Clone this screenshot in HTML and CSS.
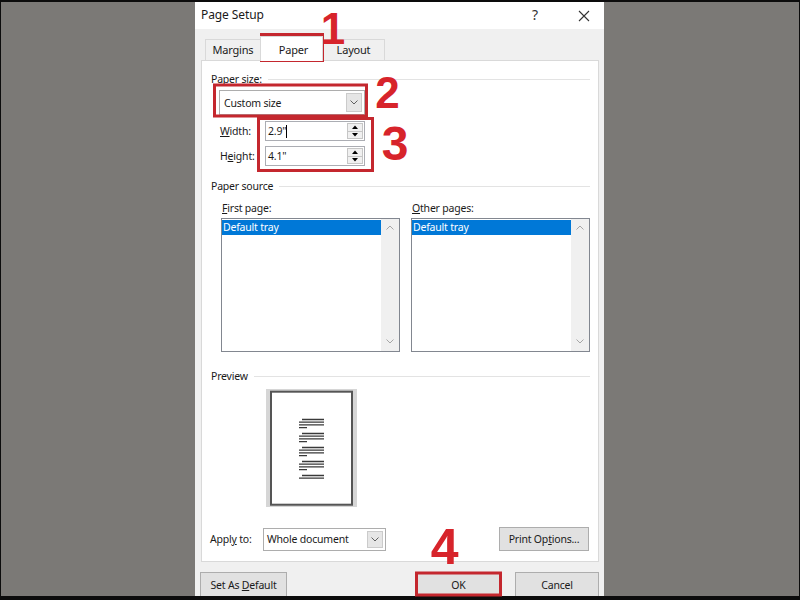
FILE: index.html
```html
<!DOCTYPE html>
<html lang="en">
	<head>
		<meta charset="UTF-8" />
		<meta name="viewport" content="width=device-width, initial-scale=1.0" />
		<title>Page Setup</title>
		<link rel="stylesheet" href="styles.css">
	</head>
	<body>
		<div class="screen">
			<div class="dialog">
				<div class="titlebar">
					<span class="title">Page Setup</span>
					<span class="help">?</span>
					<svg class="close" width="12" height="12" viewBox="0 0 12 12"><path d="M1 1 11 11M11 1 1 11" stroke="#333" stroke-width="1.1" fill="none" /></svg>
				</div>
				<div class="tabs">
					<div class="tab margins">Margins</div>
					<div class="tab paper active">Paper</div>
					<div class="tab layout">Layout</div>
				</div>
				<div class="panel">
					<div class="group first"><span>Pape<u>r</u> size:</span><i></i></div>
					<div class="select size">
						<span>Custom size</span>
						<b class="arrow"><svg width="8" height="5" viewBox="0 0 8 5"><path d="M0.5 0.5 4 4 7.5 0.5" fill="none" stroke="#606060" /></svg></b>
					</div>
					<div class="field">
						<label><u>W</u>idth:</label>
						<div class="spin">
							<span>2.9"<em class="caret"></em></span>
							<div class="spinner">
								<b><svg width="6" height="4" viewBox="0 0 6 4"><path d="M0 4 3 0.5 6 4z" /></svg></b>
								<b><svg width="6" height="4" viewBox="0 0 6 4"><path d="M0 0 3 3.5 6 0z" /></svg></b>
							</div>
						</div>
					</div>
					<div class="field second">
						<label>H<u>e</u>ight:</label>
						<div class="spin">
							<span>4.1"</span>
							<div class="spinner">
								<b><svg width="6" height="4" viewBox="0 0 6 4"><path d="M0 4 3 0.5 6 4z" /></svg></b>
								<b><svg width="6" height="4" viewBox="0 0 6 4"><path d="M0 0 3 3.5 6 0z" /></svg></b>
							</div>
						</div>
					</div>
					<div class="group source"><span>Paper source</span><i></i></div>
					<div class="sources">
						<div class="col">
							<label><u>F</u>irst page:</label>
							<div class="list">
								<div class="items"><div class="item sel">Default tray</div></div>
								<div class="scroll">
									<svg width="8" height="5" viewBox="0 0 8 5"><path d="M0.5 4.5 4 1 7.5 4.5" fill="none" stroke="#a6a6a6" /></svg>
									<svg width="8" height="5" viewBox="0 0 8 5"><path d="M0.5 0.5 4 4 7.5 0.5" fill="none" stroke="#a6a6a6" /></svg>
								</div>
							</div>
						</div>
						<div class="col">
							<label><u>O</u>ther pages:</label>
							<div class="list">
								<div class="items"><div class="item sel">Default tray</div></div>
								<div class="scroll">
									<svg width="8" height="5" viewBox="0 0 8 5"><path d="M0.5 4.5 4 1 7.5 4.5" fill="none" stroke="#a6a6a6" /></svg>
									<svg width="8" height="5" viewBox="0 0 8 5"><path d="M0.5 0.5 4 4 7.5 0.5" fill="none" stroke="#a6a6a6" /></svg>
								</div>
							</div>
						</div>
					</div>
					<div class="group preview-head"><span>Preview</span><i></i></div>
					<svg class="preview" width="91" height="118" viewBox="0 0 91 118">
						<rect width="91" height="118" fill="#d6d6d6" />
						<rect x="5" y="2.7" width="81" height="113" fill="#fff" stroke="#555" stroke-width="2" />
						<g stroke="#3a3a3a" stroke-width="1.3">
							<path d="M36 30.5H58M33 33.2H58M33 35.9H58M33 38.7H41" />
							<path d="M36 44.5H58M33 47.2H58M33 49.9H58M33 52.7H41" />
							<path d="M36 58.5H58M33 61.2H58M33 63.9H58M33 66.7H41" />
							<path d="M36 72.5H58M33 75.2H58M33 77.9H58M33 80.7H41" />
							<path d="M36 86.5H58M33 89.2H58" />
						</g>
					</svg>
					<div class="apply">
						<label>Appl<u>y</u> to:</label>
						<div class="select whole">
							<span>Whole document</span>
							<b class="arrow"><svg width="8" height="5" viewBox="0 0 8 5"><path d="M0.5 0.5 4 4 7.5 0.5" fill="none" stroke="#606060" /></svg></b>
						</div>
						<button class="options">Print Op<u>t</u>ions...</button>
					</div>
				</div>
				<div class="footer">
					<button class="default">Set As <u>D</u>efault</button>
					<button class="ok">OK</button>
					<button class="cancel">Cancel</button>
				</div>
			</div>
			<svg class="marks" width="800" height="600" viewBox="0 0 800 600">
				<g fill="none" stroke="#c4272e" stroke-width="3">
					<rect x="261.5" y="34.5" width="61" height="26" />
					<rect x="214.5" y="85" width="152" height="31" />
					<rect x="258.5" y="118.5" width="114" height="52" />
					<rect x="416.5" y="573" width="84" height="22" />
				</g>
				<g fill="#d7242b" font-family="'Liberation Sans', Arial, sans-serif" font-weight="bold" text-anchor="middle">
					<text x="333" y="44" font-size="44">1</text>
					<text x="387.5" y="108" font-size="44">2</text>
					<text x="395" y="160" font-size="48">3</text>
					<text x="444.5" y="564" font-size="50">4</text>
				</g>
			</svg>
		</div>
	</body>
</html>
```

FILE: styles.css
```css
* {
	box-sizing: border-box;
}
html,
body {
	margin: 0;
	background: #0c0c0c;
}
body {
	font-family: 'Noto Sans', sans-serif;
	font-size: 10.5px;
	letter-spacing: -0.2px;
	color: #1a1a1a;
}
u {
	text-underline-offset: 1px;
}
.screen {
	position: relative;
	width: 800px;
	height: 600px;
	border-top: 2px solid #0c0c0c;
	border-bottom: 4px solid #0c0c0c;
	border-left: 1px solid #0c0c0c;
	border-right: 1px solid #0c0c0c;
	background: #7b7976;
	display: flex;
}
.dialog {
	width: 409px;
	height: 100%;
	margin-left: 194px;
	background: #f0f0f0;
	display: flex;
	flex-direction: column;
	overflow: hidden;
}
.titlebar {
	height: 27px;
	flex: none;
	background: #fff;
	display: flex;
	align-items: center;
	padding-left: 6px;
}
.title {
	font-size: 12px;
	letter-spacing: -0.1px;
	padding-bottom: 2px;
}
.help {
	margin-left: auto;
	font-size: 14px;
	color: #333;
	padding-bottom: 2px;
}
.close {
	margin: 0 14px 0 40px;
}
.tabs {
	height: 31px;
	flex: none;
	display: flex;
	align-items: flex-end;
	padding-left: 10px;
}
.tab {
	height: 21px;
	line-height: 19px;
	text-align: center;
	font-size: 11px;
	border: 1px solid #d9d9d9;
	border-bottom: none;
	background: #f0f0f0;
}
.tab.margins {
	width: 55px;
	border-right: none;
}
.tab.paper {
	width: 63px;
}
.tab.layout {
	width: 62px;
	border-left: none;
}
.tab.active {
	position: relative;
	z-index: 1;
	height: 25px;
	padding-top: 3px;
	margin-bottom: -1px;
	background: #fff;
	padding-left: 4px;
}
.panel {
	height: 502px;
	flex: none;
	margin: 0 5px 0 6px;
	background: #fff;
	border: 1px solid #d9d9d9;
	display: flex;
	flex-direction: column;
	align-items: flex-start;
}
.group {
	align-self: stretch;
	height: 16px;
	display: flex;
	align-items: center;
	gap: 6px;
	padding: 0 8px 0 9px;
}
.group i {
	flex: 1;
	height: 1px;
	background: #e3e3e3;
}
.group.first {
	margin-top: 10px;
}
.group.source {
	margin-top: 12px;
}
.group.preview-head {
	margin-top: 16px;
}
.select {
	display: flex;
	border: 1px solid #adadad;
	background: #fff;
}
.select span {
	flex: 1;
	display: flex;
	align-items: center;
	padding-left: 4px;
}
.select .arrow {
	width: 16px;
	margin: 2px;
	background: #e6e6e6;
	border: 1px solid #cbcbcb;
	display: flex;
	align-items: center;
	justify-content: center;
}
.select.size {
	width: 146px;
	height: 25px;
	margin: 3px 0 0 17px;
}
.field {
	display: flex;
	align-items: center;
	height: 20px;
	margin: 6px 0 0 18px;
}
.field.second {
	margin-top: 5px;
}
.field label {
	width: 45px;
}
.spin {
	width: 100px;
	height: 20px;
	border: 1px solid #abadb3;
	display: flex;
}
.spin span {
	flex: 1;
	display: flex;
	align-items: center;
	padding-left: 2px;
}
.caret {
	display: inline-block;
	width: 1px;
	height: 13px;
	background: #000;
}
.spinner {
	width: 16px;
	margin: 1px;
	display: flex;
	flex-direction: column;
}
.spinner b {
	flex: 1;
	display: flex;
	align-items: center;
	justify-content: center;
	background: #f0f0f0;
	border: 1px solid #c6c6c6;
}
.spinner b + b {
	border-top: none;
}
.sources {
	display: flex;
	gap: 11px;
	margin: 6px 0 0 19px;
}
.col {
	width: 179px;
	display: flex;
	flex-direction: column;
	gap: 2px;
}
.col label {
	height: 16px;
	line-height: 16px;
	padding-left: 1px;
}
.list {
	height: 134px;
	border: 1px solid #828790;
	display: flex;
}
.items {
	flex: 1;
	padding-top: 1px;
}
.item.sel {
	height: 15px;
	line-height: 15px;
	padding-left: 1px;
	background: #0078d7;
	color: #fff;
}
.scroll {
	width: 18px;
	background: #f0f0f0;
	display: flex;
	flex-direction: column;
	justify-content: space-between;
	align-items: center;
	padding: 6px 0 7px;
}
.preview {
	margin: 5px 0 0 64px;
}
.apply {
	align-self: stretch;
	display: flex;
	align-items: center;
	height: 24px;
	margin-top: 20px;
	padding: 0 9px 0 8px;
}
.apply label {
	width: 53px;
}
.select.whole {
	width: 123px;
	height: 23px;
}
.select.whole span {
	padding-left: 3px;
}
button {
	font: inherit;
	letter-spacing: inherit;
	color: inherit;
	background: #e1e1e1;
	border: 1px solid #adadad;
	padding: 0;
}
.options {
	margin-left: auto;
	width: 90px;
	height: 24px;
}
.footer {
	display: flex;
	gap: 15px;
	margin-top: 10px;
	padding: 0 5px;
}
.footer button {
	height: 26px;
	flex: none;
}
.default {
	width: 87px;
}
.ok {
	width: 83px;
	margin-left: auto;
}
.cancel {
	width: 84px;
}
.marks {
	position: absolute;
	left: -1px;
	top: -2px;
	pointer-events: none;
}
```
